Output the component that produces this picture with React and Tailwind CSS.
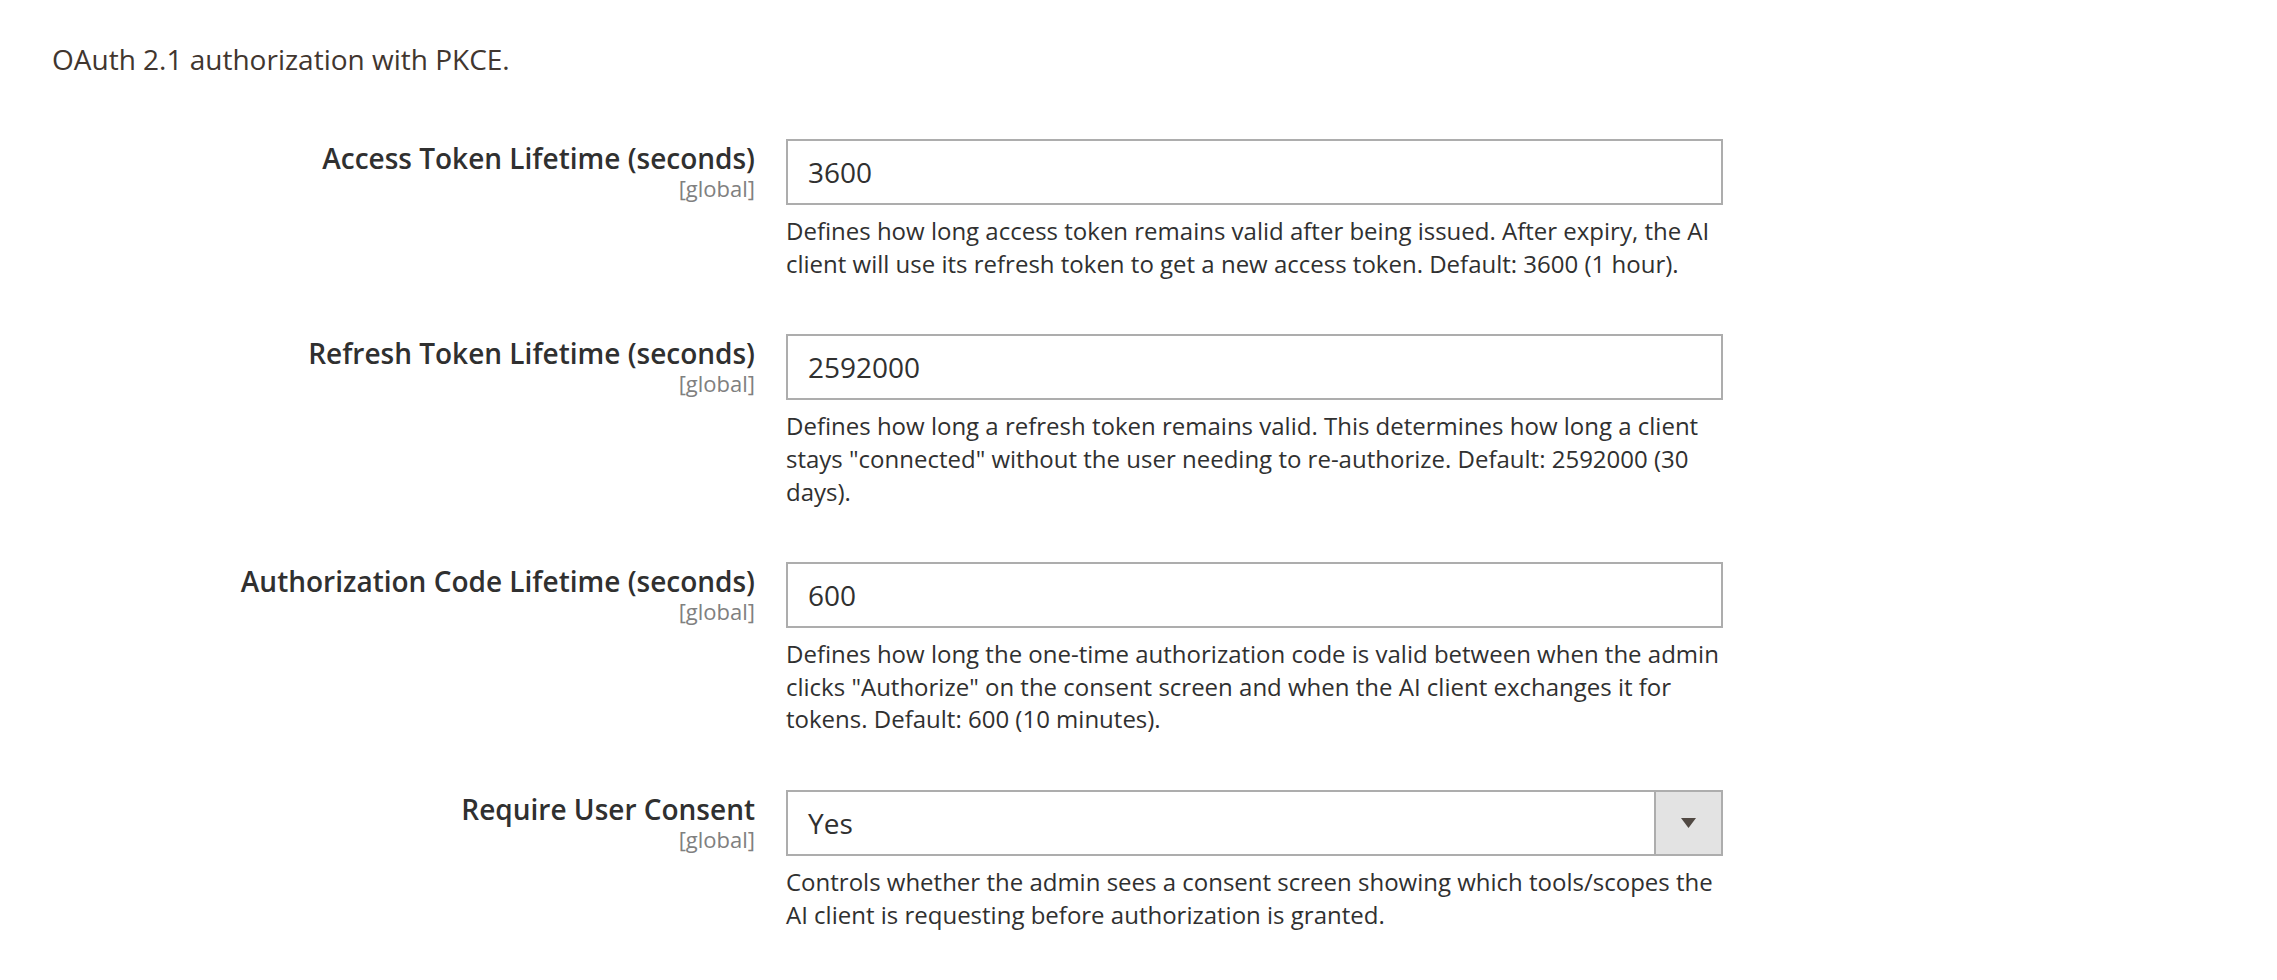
const fields = [
    {
        label: "Access Token Lifetime (seconds)",
        value: "3600",
        note: "Defines how long access token remains valid after being issued. After expiry, the AI client will use its refresh token to get a new access token. Default: 3600 (1 hour).",
    },
    {
        label: "Refresh Token Lifetime (seconds)",
        value: "2592000",
        note: 'Defines how long a refresh token remains valid. This determines how long a client stays "connected" without the user needing to re-authorize. Default: 2592000 (30 days).',
    },
    {
        label: "Authorization Code Lifetime (seconds)",
        value: "600",
        note: 'Defines how long the one-time authorization code is valid between when the admin clicks "Authorize" on the consent screen and when the AI client exchanges it for tokens. Default: 600 (10 minutes).',
    },
    {
        label: "Require User Consent",
        value: "Yes",
        select: true,
        note: "Controls whether the admin sees a consent screen showing which tools/scopes the AI client is requesting before authorization is granted.",
    },
];

function TextControl({ value }) {
    return (
        <input
            type="text"
            readOnly
            value={value}
            className="block w-full h-[66px] border-2 border-[#adadad] bg-white px-[20px] text-[28px] leading-[38px] text-[#303030] outline-none"
        />
    );
}

function SelectControl({ value }) {
    return (
        <div className="flex h-[66px] w-full border-2 border-[#adadad] bg-white">
            <div className="flex-1 flex items-center px-[20px] text-[28px] leading-[38px] text-[#303030]">{value}</div>
            <div className="w-[67px] flex items-center justify-center border-l-2 border-[#adadad] bg-[#e3e3e3]">
                <svg width="15" height="10" viewBox="0 0 15 10">
                    <path d="M0 0 H15 L7.5 10 Z" fill="#514943" />
                </svg>
            </div>
        </div>
    );
}

export default function App() {
    return (
        <div className="min-h-[980px] bg-white pl-[52px] pt-[40px] font-['Open_Sans',sans-serif]">
            <p className="text-[28px] leading-[38px] text-[#41362f]">OAuth 2.1 authorization with PKCE.</p>

            <div className="mt-[61px] flex flex-col gap-[54px]">
                {fields.map((f) => (
                    <div key={f.label} className="grid grid-cols-[703px_937px] gap-x-[31px]">
                        <div className="text-right">
                            <div className="text-[28px] leading-[38px] font-semibold text-[#303030]">{f.label}</div>
                            <div className="text-[22px] leading-[22px] text-[#808080]">[global]</div>
                        </div>
                        <div>
                            {f.select ? <SelectControl value={f.value} /> : <TextControl value={f.value} />}
                            <p className="mt-[10px] text-[24px] leading-[1.36] text-[#303030]">{f.note}</p>
                        </div>
                    </div>
                ))}
            </div>
        </div>
    );
}
